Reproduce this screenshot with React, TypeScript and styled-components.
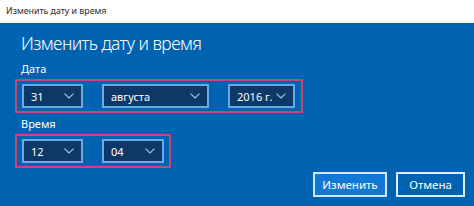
import styled, { createGlobalStyle } from "styled-components";

const GlobalStyle = createGlobalStyle`
  html, body {
    margin: 0;
    padding: 0;
    background: #ffffff;
  }
  body {
    font-family: "Noto Sans", "Open Sans", "Liberation Sans", sans-serif;
  }
`;

const Window = styled.div`
  width: 474px;
  height: 206px;
  overflow: hidden;
  display: flex;
  flex-direction: column;
`;

const TitleBar = styled.div`
  height: 23px;
  line-height: 22px;
  padding-left: 6px;
  font-size: 8.8px;
  color: #2b2b2b;
  background: #ffffff;
`;

const Panel = styled.div`
  flex: 1;
  background: #0063b1;
  padding: 7px 9px 0 15px;
  display: flex;
  flex-direction: column;
`;

const Heading = styled.div`
  font-size: 17.5px;
  font-weight: 300;
  color: #ffffff;
  line-height: 26px;
  padding-left: 6px;
  letter-spacing: -0.6px;
`;

const Label = styled.div<{ $top: number }>`
  font-size: 11px;
  color: #ffffff;
  line-height: 14px;
  margin-top: ${(p) => p.$top}px;
  padding-left: 6px;
`;

const Group = styled.div<{ $width: number; $height: number }>`
  box-sizing: border-box;
  width: ${(p) => p.$width}px;
  height: ${(p) => p.$height}px;
  margin-top: 3px;
  border: 2px solid #c4486f;
  padding: 3px 0 0 5px;
  display: flex;
  gap: 19px;
`;

const Select = styled.div<{ $width: number }>`
  box-sizing: border-box;
  width: ${(p) => p.$width}px;
  height: 24px;
  background: #0d3868;
  border: 2px solid #6aaae4;
  color: #ffffff;
  font-size: 11px;
  white-space: nowrap;
  display: flex;
  align-items: center;
  justify-content: space-between;
  padding: 0 7px 0 7px;
`;

const Chevron = () => (
  <svg width="10" height="6" viewBox="0 0 10 6">
    <path d="M0.5 0.7 L5 5 L9.5 0.7" fill="none" stroke="#a9c9e8" strokeWidth="1.1" />
  </svg>
);

const Footer = styled.div`
  margin-top: 4px;
  display: flex;
  justify-content: flex-end;
  gap: 9px;
`;

const Button = styled.div<{ $primary?: boolean }>`
  box-sizing: border-box;
  width: ${(p) => (p.$primary ? 74 : 69)}px;
  height: 25px;
  border: 2px solid ${(p) => (p.$primary ? "#cfe6fa" : "#dcecf9")};
  background: ${(p) => (p.$primary ? "#1178d5" : "#0063b1")};
  color: #ffffff;
  font-size: 11.5px;
  display: flex;
  align-items: center;
  justify-content: center;
`;

type Field = { value: string; width: number };

const dateFields: Field[] = [
  { value: "31", width: 61 },
  { value: "августа", width: 107 },
  { value: "2016 г.", width: 67 },
];

const timeFields: Field[] = [
  { value: "12", width: 61 },
  { value: "04", width: 62 },
];

const App = () => {
  return (
    <>
      <GlobalStyle />
      <Window>
        <TitleBar>Изменить дату и время</TitleBar>
        <Panel>
          <Heading>Изменить дату и время</Heading>
          <Label $top={6}>Дата</Label>
          <Group $width={288} $height={34}>
            {dateFields.map((f) => (
              <Select key={f.value} $width={f.width}>
                <span>{f.value}</span>
                <Chevron />
              </Select>
            ))}
          </Group>
          <Label $top={4}>Время</Label>
          <Group $width={156} $height={34}>
            {timeFields.map((f) => (
              <Select key={f.value} $width={f.width}>
                <span>{f.value}</span>
                <Chevron />
              </Select>
            ))}
          </Group>
          <Footer>
            <Button $primary>Изменить</Button>
            <Button>Отмена</Button>
          </Footer>
        </Panel>
      </Window>
    </>
  );
};

export default App;
